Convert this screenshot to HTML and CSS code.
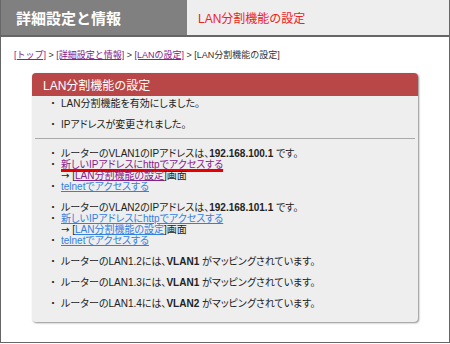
FILE: index.html
```html
<!DOCTYPE html>
<html lang="ja">
<head>
  <meta charset="UTF-8">
  <meta name="viewport" content="width=device-width, initial-scale=1.0">
  <title>LAN分割機能の設定</title>
  <link rel="stylesheet" href="styles.css">
</head>
<body>
  <div class="page">
    <!-- Page header -->
    <div class="page-header">
      <div class="header-title">詳細設定と情報</div>
      <div class="header-sub">LAN分割機能の設定</div>
    </div>

    <!-- Breadcrumb -->
    <div class="breadcrumb">
      <a href="#" class="visited">[トップ]</a> &gt;
      <a href="#" class="visited">[詳細設定と情報]</a> &gt;
      <a href="#" class="visited">[LANの設定]</a> &gt;
      <span>[LAN分割機能の設定]</span>
    </div>

    <!-- Result panel -->
    <div class="panel">
      <div class="panel-title">LAN分割機能の設定</div>
      <div class="panel-body">
        <div class="list">
          <p class="item bullet">LAN分割機能を有効にしました。</p>
          <p class="item bullet">IPアドレスが変更されました。</p>
        </div>

        <hr class="separator">

        <div class="list">
          <div class="item">
            <p class="bullet">ルーターのVLAN1のIPアドレスは、<b>192.168.100.1</b> です。</p>
            <p class="bullet"><a href="#" class="visited marked">新しいIPアドレスにhttpでアクセスする</a></p>
            <p class="sub"><span class="arrow">→</span> [<a href="#" class="visited">LAN分割機能の設定</a>]画面</p>
            <p class="bullet"><a href="#">telnetでアクセスする</a></p>
          </div>
          <div class="item">
            <p class="bullet">ルーターのVLAN2のIPアドレスは、<b>192.168.101.1</b> です。</p>
            <p class="bullet"><a href="#">新しいIPアドレスにhttpでアクセスする</a></p>
            <p class="sub"><span class="arrow">→</span> [<a href="#">LAN分割機能の設定</a>]画面</p>
            <p class="bullet"><a href="#">telnetでアクセスする</a></p>
          </div>
          <p class="item bullet">ルーターのLAN1.2には、<b>VLAN1</b> がマッピングされています。</p>
          <p class="item bullet">ルーターのLAN1.3には、<b>VLAN1</b> がマッピングされています。</p>
          <p class="item bullet">ルーターのLAN1.4には、<b>VLAN2</b> がマッピングされています。</p>
        </div>
      </div>
    </div>
  </div>
</body>
</html>
```

FILE: styles.css
```css
body {
  margin: 0;
  padding: 0;
  background-color: #ffffff;
  font-family: "Liberation Sans", "Noto Sans CJK JP", sans-serif;
  color: #222222;
}

p {
  margin: 0;
}

a {
  color: #3380e0;
  text-decoration: underline;
}

a.visited {
  color: #86208a;
}

.page {
  width: 450px;
  height: 343px;
  box-sizing: border-box;
  border: 1px solid #666666;
  border-top: none;
}

/* Header bar */
.page-header {
  display: flex;
  height: 35px;
  border-bottom: 2px solid #666666;
  background-color: #eeeeee;
}

.header-title {
  width: 171px;
  padding-left: 15px;
  display: flex;
  align-items: center;
  background-color: #808080;
  color: #ffffff;
  font-size: 15px;
  font-weight: bold;
}

.header-sub {
  padding-left: 11px;
  display: flex;
  align-items: center;
  color: #ee2222;
  font-size: 12px;
}

/* Breadcrumb */
.breadcrumb {
  margin: 12px 0 0 13px;
  font-size: 9px;
  line-height: 12px;
  color: #333333;
}

/* Panel */
.panel {
  width: 386px;
  margin: 12px 0 0 31px;
  border-radius: 4px;
  background-color: #eeeeee;
  box-shadow: 1px 1px 2px rgba(0, 0, 0, 0.45);
}

.panel-title {
  height: 23px;
  padding-left: 11px;
  display: flex;
  align-items: center;
  border-radius: 4px 4px 0 0;
  background-color: #b94747;
  color: #ffffff;
  font-size: 12px;
}

.panel-body {
  padding: 2px 3px 13px;
  font-size: 10px;
  line-height: 11px;
  font-feature-settings: "palt";
}

.list {
  padding-left: 13px;
  display: flex;
  flex-direction: column;
  gap: 10px;
}

.bullet,
.sub {
  padding-left: 13px;
  position: relative;
}

.bullet::before {
  content: "・";
  position: absolute;
  left: 0;
  top: 0;
  font-feature-settings: normal;
}

.arrow {
  font-family: "DejaVu Sans", sans-serif;
}

.separator {
  margin: 8px 0 9px;
  border: none;
  border-top: 1px solid #a9a9a9;
}

/* red highlight under the first link */
.marked {
  position: relative;
}

.marked::after {
  content: "";
  position: absolute;
  left: 0;
  right: 0;
  bottom: -2px;
  height: 3px;
  background-color: #e60000;
}
```
